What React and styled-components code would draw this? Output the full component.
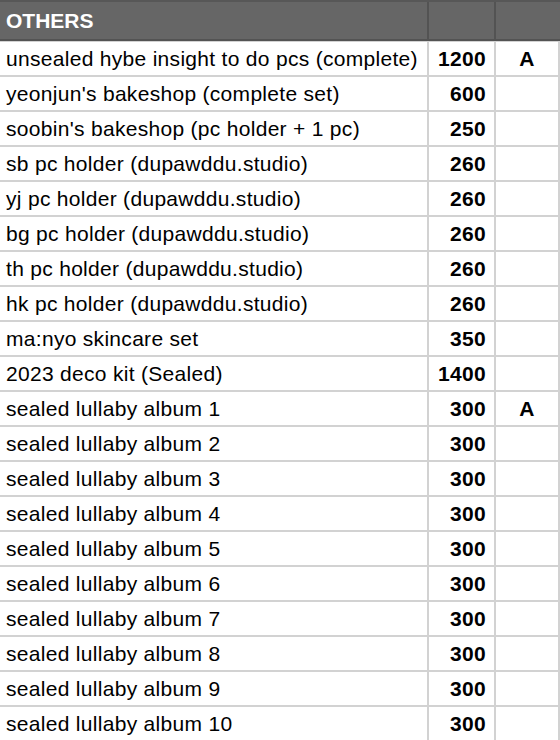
import React from "react";
import styled, { createGlobalStyle } from "styled-components";

const Global = createGlobalStyle`
  html, body { margin: 0; padding: 0; background: #fff; }
  body { font-family: "Liberation Sans", Arial, sans-serif; }
`;

const Sheet = styled.div`
  width: 560px;
  display: flex;
  flex-direction: column;
`;

const HeaderRow = styled.div`
  display: grid;
  grid-template-columns: 427px 65px 1fr;
  column-gap: 2px;
  background: #535353;
  border-top: 2px solid #575757;
  border-bottom: 2px solid #535353;
`;

const HeaderCell = styled.div`
  height: 37px;
  background: #666666;
  color: #ffffff;
  font-weight: bold;
  font-size: 21px;
  display: flex;
  align-items: center;
  padding-left: 6px;
  box-sizing: border-box;
`;

const Body = styled.div`
  display: grid;
  grid-template-columns: 427px 65px 62px;
  gap: 2px;
  background: #d2d2d2;
  padding-top: 1px;
  padding-right: 2px;
  width: 558px;
`;

const Cell = styled.div`
  height: 33px;
  background: #ffffff;
  color: #000;
  font-size: 21px;
  letter-spacing: 0.3px;
  font-weight: ${(p) => (p.$bold ? "bold" : "normal")};
  display: flex;
  align-items: center;
  justify-content: ${(p) =>
    p.$align === "right" ? "flex-end" : p.$align === "center" ? "center" : "flex-start"};
  padding: 0 ${(p) => (p.$align === "right" ? "8px" : "0")} 0 ${(p) => (p.$align === "left" ? "6px" : "0")};
  box-sizing: border-box;
  white-space: nowrap;
  overflow: hidden;
`;

const rows = [
  ["unsealed hybe insight to do pcs (complete)", "1200", "A"],
  ["yeonjun's bakeshop (complete set)", "600", ""],
  ["soobin's bakeshop (pc holder + 1 pc)", "250", ""],
  ["sb pc holder (dupawddu.studio)", "260", ""],
  ["yj pc holder (dupawddu.studio)", "260", ""],
  ["bg pc holder (dupawddu.studio)", "260", ""],
  ["th pc holder (dupawddu.studio)", "260", ""],
  ["hk pc holder (dupawddu.studio)", "260", ""],
  ["ma:nyo skincare set", "350", ""],
  ["2023 deco kit (Sealed)", "1400", ""],
  ["sealed lullaby album 1", "300", "A"],
  ["sealed lullaby album 2", "300", ""],
  ["sealed lullaby album 3", "300", ""],
  ["sealed lullaby album 4", "300", ""],
  ["sealed lullaby album 5", "300", ""],
  ["sealed lullaby album 6", "300", ""],
  ["sealed lullaby album 7", "300", ""],
  ["sealed lullaby album 8", "300", ""],
  ["sealed lullaby album 9", "300", ""],
  ["sealed lullaby album 10", "300", ""],
];

export default function App() {
  return (
    <Sheet>
      <Global />
      <HeaderRow>
        <HeaderCell>OTHERS</HeaderCell>
        <HeaderCell />
        <HeaderCell />
      </HeaderRow>
      <Body>
        {rows.map(([name, price, mark], i) => (
          <React.Fragment key={i}>
            <Cell $align="left">{name}</Cell>
            <Cell $align="right" $bold>{price}</Cell>
            <Cell $align="center" $bold>{mark}</Cell>
          </React.Fragment>
        ))}
      </Body>
    </Sheet>
  );
}
